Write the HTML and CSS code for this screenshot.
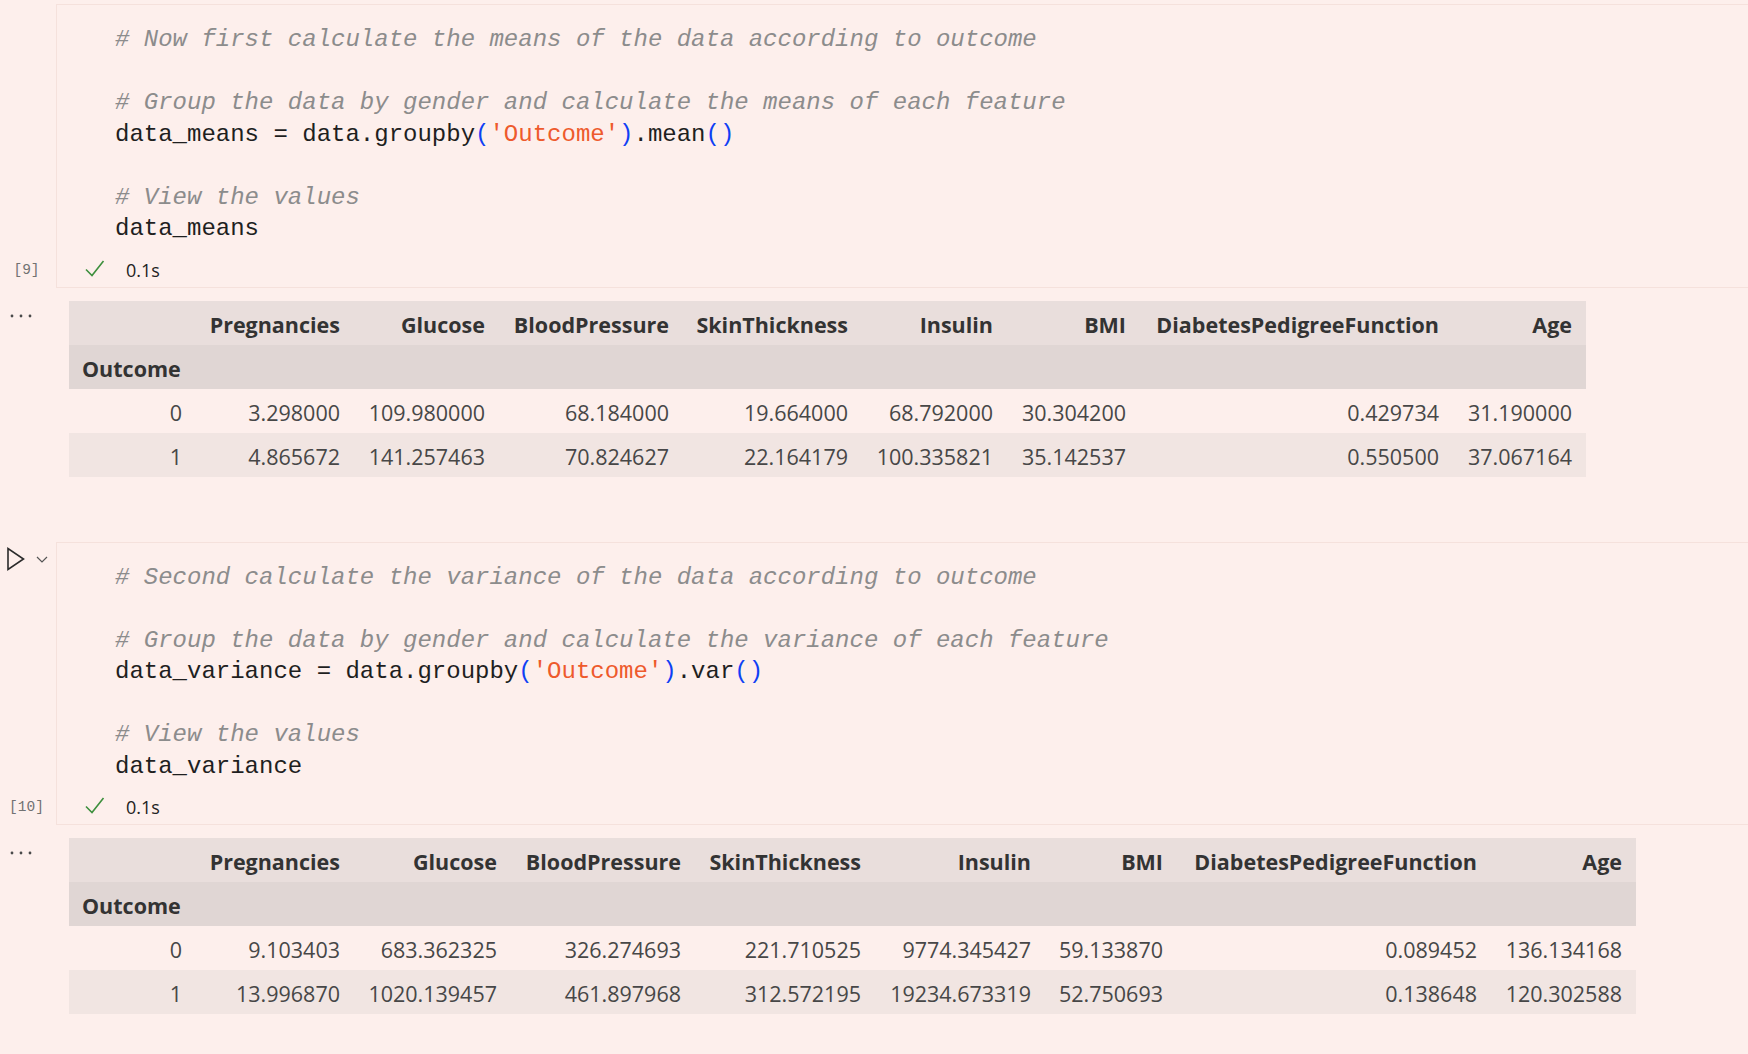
FILE: index.html
```html
<!DOCTYPE html>
<html>
<head>
<meta charset="utf-8">
<link rel="stylesheet" href="styles.css">
</head>
<body>
<div class="notebook">
  <div class="cell">
    <div class="gutter">
      <span class="count">[9]</span>
    </div>
    <div class="cell-box">
<pre class="code"><span class="cm"># Now first calculate the means of the data according to outcome</span>

<span class="cm"># Group the data by gender and calculate the means of each feature</span>
data_means = data.groupby<span class="br">(</span><span class="st">'Outcome'</span><span class="br">)</span>.mean<span class="br">()</span>

<span class="cm"># View the values</span>
data_means</pre>
      <div class="status">
        <svg class="check" width="20" height="18" viewBox="0 0 20 18"><path d="M1 9.5 L7 15.5 L18.5 1" fill="none" stroke="#3d8f3d" stroke-width="1.6"/></svg>
        <span class="time">0.1s</span>
      </div>
    </div>
  </div>

  <div class="output">
    <div class="out-gutter">
      <svg class="dots" width="24" height="6" viewBox="0 0 24 6"><circle cx="3" cy="3" r="1.4"/><circle cx="12" cy="3" r="1.4"/><circle cx="21" cy="3" r="1.4"/></svg>
    </div>
    <table class="df df-means">
      <colgroup><col><col><col><col><col><col><col><col><col></colgroup>
      <thead>
        <tr class="hr1"><th></th><th>Pregnancies</th><th>Glucose</th><th>BloodPressure</th><th>SkinThickness</th><th>Insulin</th><th>BMI</th><th>DiabetesPedigreeFunction</th><th>Age</th></tr>
        <tr class="hr2"><th class="idx-name">Outcome</th><th></th><th></th><th></th><th></th><th></th><th></th><th></th><th></th></tr>
      </thead>
      <tbody>
        <tr><th class="idx">0</th><td>3.298000</td><td>109.980000</td><td>68.184000</td><td>19.664000</td><td>68.792000</td><td>30.304200</td><td>0.429734</td><td>31.190000</td></tr>
        <tr class="stripe"><th class="idx">1</th><td>4.865672</td><td>141.257463</td><td>70.824627</td><td>22.164179</td><td>100.335821</td><td>35.142537</td><td>0.550500</td><td>37.067164</td></tr>
      </tbody>
    </table>
  </div>

  <div class="cell cell-next">
    <div class="gutter">
      <svg class="run" width="52" height="30" viewBox="0 0 52 30"><path d="M8 4.5 L8 25.5 L23.5 15 Z" fill="none" stroke="#2b2b2b" stroke-width="1.6" stroke-linejoin="miter"/><path d="M37 13 L42 18 L47 13" fill="none" stroke="#555" stroke-width="1.2"/></svg>
      <span class="count">[10]</span>
    </div>
    <div class="cell-box">
<pre class="code"><span class="cm"># Second calculate the variance of the data according to outcome</span>

<span class="cm"># Group the data by gender and calculate the variance of each feature</span>
data_variance = data.groupby<span class="br">(</span><span class="st">'Outcome'</span><span class="br">)</span>.var<span class="br">()</span>

<span class="cm"># View the values</span>
data_variance</pre>
      <div class="status">
        <svg class="check" width="20" height="18" viewBox="0 0 20 18"><path d="M1 9.5 L7 15.5 L18.5 1" fill="none" stroke="#3d8f3d" stroke-width="1.6"/></svg>
        <span class="time">0.1s</span>
      </div>
    </div>
  </div>

  <div class="output">
    <div class="out-gutter">
      <svg class="dots" width="24" height="6" viewBox="0 0 24 6"><circle cx="3" cy="3" r="1.4"/><circle cx="12" cy="3" r="1.4"/><circle cx="21" cy="3" r="1.4"/></svg>
    </div>
    <table class="df df-var">
      <colgroup><col><col><col><col><col><col><col><col><col></colgroup>
      <thead>
        <tr class="hr1"><th></th><th>Pregnancies</th><th>Glucose</th><th>BloodPressure</th><th>SkinThickness</th><th>Insulin</th><th>BMI</th><th>DiabetesPedigreeFunction</th><th>Age</th></tr>
        <tr class="hr2"><th class="idx-name">Outcome</th><th></th><th></th><th></th><th></th><th></th><th></th><th></th><th></th></tr>
      </thead>
      <tbody>
        <tr><th class="idx">0</th><td>9.103403</td><td>683.362325</td><td>326.274693</td><td>221.710525</td><td>9774.345427</td><td>59.133870</td><td>0.089452</td><td>136.134168</td></tr>
        <tr class="stripe"><th class="idx">1</th><td>13.996870</td><td>1020.139457</td><td>461.897968</td><td>312.572195</td><td>19234.673319</td><td>52.750693</td><td>0.138648</td><td>120.302588</td></tr>
      </tbody>
    </table>
  </div>
</div>
</body>
</html>
```

FILE: styles.css
```css
html, body {
  margin: 0;
  padding: 0;
  background: #fdefec;
  overflow: hidden;
}

.notebook {
  padding-top: 4px;
}

.cell {
  display: flex;
  align-items: stretch;
}

.cell-next {
  margin-top: 65px;
}

.gutter {
  width: 56px;
  flex: none;
  display: flex;
  flex-direction: column;
}

.run {
  display: block;
  margin-top: 2px;
}

.count {
  margin-top: auto;
  margin-bottom: 3px;
  padding-right: 3px;
  height: 30px;
  line-height: 30px;
  text-align: center;
  font-family: "Liberation Mono", monospace;
  font-size: 14.5px;
  color: #727272;
}

.cell-box {
  flex: 1;
  border: 1px solid #f5e1dc;
  border-right: 0;
  padding: 19px 0 2px 58px;
}

.code {
  margin: 0;
  font-family: "Liberation Mono", "DejaVu Sans Mono", monospace;
  font-size: 24px;
  line-height: 31.5px;
  color: #1f1f1f;
  white-space: pre;
}

.cm {
  color: #8c8c8c;
  font-style: italic;
}

.st {
  color: #ee5a2c;
}

.br {
  color: #0f3ff5;
}

.status {
  margin-top: 10px;
  margin-left: -30px;
  height: 30px;
  display: flex;
  align-items: center;
}

.check {
  display: block;
  margin-top: -2px;
}

.time {
  margin-left: 21px;
  font-family: "Open Sans", sans-serif;
  font-size: 18px;
  color: #222;
}

.output {
  display: flex;
  margin-top: 13px;
}

.out-gutter {
  width: 56px;
  flex: none;
}

.dots {
  display: block;
  margin: 12px 0 0 9px;
  fill: #4a4a4a;
}

.df {
  margin-left: 13px;
  border-collapse: collapse;
  border-spacing: 0;
  table-layout: fixed;
  font-family: "Open Sans", sans-serif;
  font-size: 21.5px;
}

.df-means { width: 1517px; }
.df-var { width: 1567px; }

.df th, .df td {
  height: 44px;
  padding: 3px 14px 0 13px;
  text-align: right;
  white-space: nowrap;
  vertical-align: middle;
  box-sizing: border-box;
}

.df th {
  font-weight: 700;
  color: #333;
}

.df td {
  font-weight: 400;
  color: #474747;
}

.df th.idx {
  font-weight: 400;
  color: #474747;
}

.df th.idx-name {
  text-align: left;
}

.hr1 { background: #e9dedc; }
.hr2 { background: #e0d6d4; }
.stripe { background: #f1e5e2; }

.df-means col:nth-child(1) { width: 127px; }
.df-means col:nth-child(2) { width: 158px; }
.df-means col:nth-child(3) { width: 145px; }
.df-means col:nth-child(4) { width: 184px; }
.df-means col:nth-child(5) { width: 179px; }
.df-means col:nth-child(6) { width: 145px; }
.df-means col:nth-child(7) { width: 133px; }
.df-means col:nth-child(8) { width: 313px; }
.df-means col:nth-child(9) { width: 133px; }

.df-var col:nth-child(1) { width: 127px; }
.df-var col:nth-child(2) { width: 158px; }
.df-var col:nth-child(3) { width: 157px; }
.df-var col:nth-child(4) { width: 184px; }
.df-var col:nth-child(5) { width: 180px; }
.df-var col:nth-child(6) { width: 170px; }
.df-var col:nth-child(7) { width: 132px; }
.df-var col:nth-child(8) { width: 314px; }
.df-var col:nth-child(9) { width: 145px; }
```
